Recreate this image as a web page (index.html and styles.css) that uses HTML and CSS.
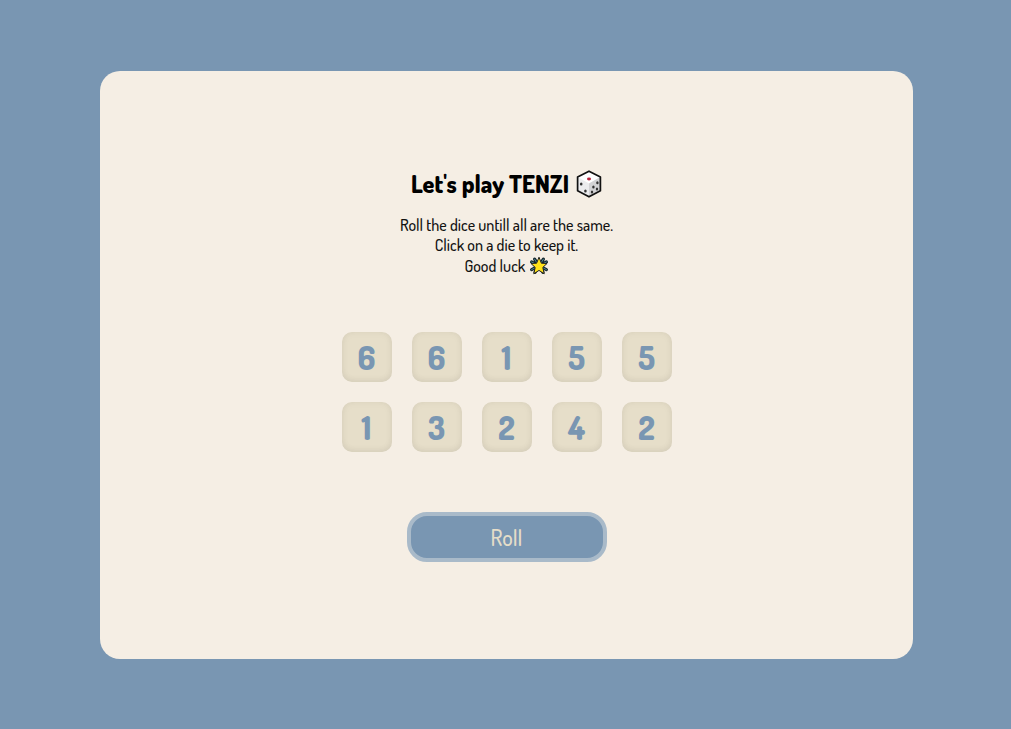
FILE: index.html
```
<!DOCTYPE html>
<html lang="en">
<head>
<meta charset="utf-8">
<meta name="viewport" content="width=device-width, initial-scale=1">
<title>Tenzi</title>
<link rel="stylesheet" href="styles.css">
</head>
<body>
<main class="board">
  <h1 class="title">Let's play TENZI
    <svg class="die-icon" viewBox="0 0 26 28" aria-hidden="true">
      <path d="M13 1.2 24.4 7v13.8L13 26.8 1.6 20.8V7Z" fill="#ececee"/>
      <path d="M13 1.2 24.4 7 13 13.4 1.6 7Z" fill="#fff"/>
      <path d="M13 13.4 24.4 7v13.8L13 26.8Z" fill="#d3d3d5"/>
      <path d="M13 1.2 24.4 7v13.8L13 26.8 1.6 20.8V7Z" fill="none" stroke="#111" stroke-width="1.7" stroke-linejoin="round"/>
      <ellipse cx="13" cy="9" rx="2" ry="1.4" fill="#b8233d"/>
      <g fill="#333"><ellipse cx="5.2" cy="14" rx="1.3" ry="1.5"/><ellipse cx="9.4" cy="21" rx="1.3" ry="1.5"/><ellipse cx="21.4" cy="12.8" rx="1.2" ry="1.5"/><ellipse cx="17.4" cy="17" rx="1.2" ry="1.5"/><ellipse cx="21" cy="19" rx="1.2" ry="1.5"/><ellipse cx="16" cy="22" rx="1.2" ry="1.5"/></g>
    </svg>
  </h1>
  <p class="rules">Roll the dice untill all are the same.<br>Click on a die to keep it.<br>Good luck
    <svg class="star-icon" viewBox="0 0 20 20" aria-hidden="true">
      <g stroke="#15252c" stroke-width="3.2" stroke-linecap="round"><path d="M2.6 6 17.4 13.6M17.4 6 2.6 13.6M5.6 3.2 14 16.4M14.4 3.2 6 16.4"/></g>
      <g stroke="#4d8c99" stroke-width="1" stroke-linecap="round"><path d="M2.6 6 17.4 13.6M17.4 6 2.6 13.6M5.6 3.2 14 16.4M14.4 3.2 6 16.4"/></g>
      <path d="M10 1.2 12.4 7.2 18 7.5 13.8 11.4 15.2 17.8 10 14.4 4.8 17.8 6.2 11.4 2 7.5 7.6 7.2Z" fill="#ffe21a" stroke="#222" stroke-width="1" stroke-linejoin="round"/>
    </svg>
  </p>
  <div class="dice">
    <button class="die" type="button">6</button>
    <button class="die" type="button">6</button>
    <button class="die" type="button">1</button>
    <button class="die" type="button">5</button>
    <button class="die" type="button">5</button>
    <button class="die" type="button">1</button>
    <button class="die" type="button">3</button>
    <button class="die" type="button">2</button>
    <button class="die" type="button">4</button>
    <button class="die" type="button">2</button>
  </div>
  <button class="roll" type="button">Roll</button>
</main>
</body>
</html>
```

FILE: styles.css
```
* {
  box-sizing: border-box;
}

body {
  display: flex;
  min-height: 100vh;
  margin: 0;
  padding: 71px 98px 70px 100px;
  background: #7996b2;
  color: #111;
  font-family: Dosis, "Liberation Sans Narrow", "Roboto", sans-serif;
  font-weight: 500;
}

.board {
  flex: 1;
  display: flex;
  flex-direction: column;
  align-items: center;
  justify-content: center;
  border-radius: 20px;
  background: #f5eee4;
}

.title {
  display: flex;
  align-items: center;
  gap: 7px;
  margin: 0;
  color: #000;
  font-size: 24px;
  font-weight: 800;
  line-height: 32px;
}

.die-icon {
  width: 26px;
  height: 28px;
}

.rules {
  margin: 15px 0 56px;
  font-size: 16px;
  line-height: 20px;
  text-align: center;
}

.star-icon {
  width: 20px;
  height: 20px;
  vertical-align: -4px;
  margin-top: 1px;
}

.dice {
  display: grid;
  grid-template-columns: repeat(5, 50px);
  grid-auto-rows: 50px;
  gap: 20px;
}

.die {
  padding: 0;
  border: 0;
  border-radius: 10px;
  background: #e6dec9;
  box-shadow: inset 0 0 8px rgba(0, 0, 0, 0.04), inset 0 -2px 6px rgba(0, 0, 0, 0.05);
  color: #7996b2;
  font: inherit;
  font-size: 32px;
  font-weight: 800;
  line-height: 52px;
}

.roll {
  width: 200px;
  height: 50px;
  margin-top: 60px;
  padding: 0;
  border: 4px solid #a9bac9;
  border-radius: 20px;
  background: #7996b2;
  color: #e6dec9;
  font: inherit;
  font-size: 22px;
}
```
